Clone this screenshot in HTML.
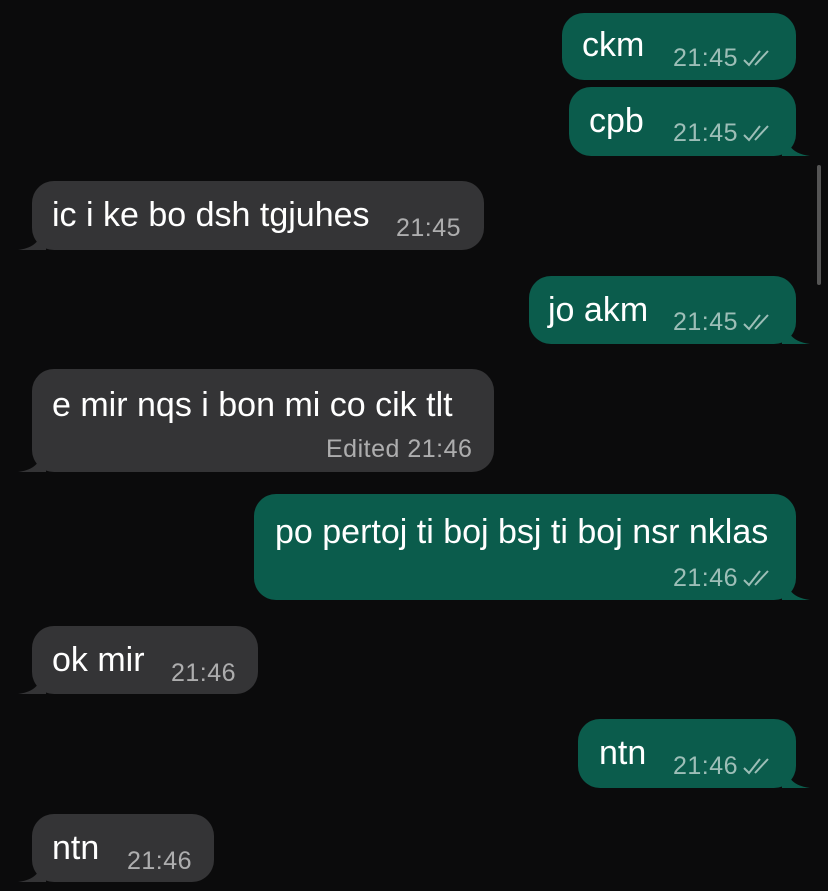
<!DOCTYPE html><html><head><style>
body{margin:0;width:828px;height:891px;background:#0b0b0c;overflow:hidden;position:relative;font-family:"Liberation Sans",sans-serif}
.b{position:absolute;border-radius:22px;color:#fff;font-size:34px;box-sizing:border-box}
.o{background:#0b5c4c}.i{background:#343436}
.t{position:absolute;font-size:25px;color:rgba(255,255,255,.6);letter-spacing:.5px;white-space:nowrap}
.m{position:absolute;top:0;white-space:nowrap}
.tl,.tr{position:absolute;bottom:0;width:28px;height:28px}
.tr{right:-14px}.tl{left:-14px}
.ck{display:inline-block;width:30px;height:20px;vertical-align:-2px;margin-left:4px}
</style></head><body>
<div style="position:absolute;left:817px;top:165px;width:4px;height:120px;background:#555;border-radius:2px"></div>

<div class="b o" style="left:562px;top:13px;width:234px;height:67px"><span class="m" style="left:20px;top:13px">ckm</span><span class="t" style="left:111px;top:31px">21:45<svg class="ck" viewBox="0 0 30 20"><path d="M2 12 L7 17 L18 3 M13 17 L26 3" stroke="rgba(255,255,255,.6)" stroke-width="2" fill="none"/></svg></span></div>

<div class="b o" style="left:569px;top:87px;width:227px;height:69px"><span class="m" style="left:20px;top:15px">cpb</span><span class="t" style="left:104px;top:32px">21:45<svg class="ck" viewBox="0 0 30 20"><path d="M2 12 L7 17 L18 3 M13 17 L26 3" stroke="rgba(255,255,255,.6)" stroke-width="2" fill="none"/></svg></span>
<svg class="tr" viewBox="0 0 28 28"><path d="M0 0 L8 18 Q13 26 28 28 L0 28Z" fill="#0b5c4c"/></svg></div>

<div class="b i" style="left:32px;top:181px;width:452px;height:69px"><span class="m" style="left:20px;top:15px">ic i ke bo dsh tgjuhes</span><span class="t" style="left:364px;top:33px">21:45</span>
<svg class="tl" viewBox="0 0 28 28"><path d="M28 0 L20 18 Q15 26 0 28 L28 28Z" fill="#343436"/></svg></div>

<div class="b o" style="left:529px;top:276px;width:267px;height:68px"><span class="m" style="left:19px;top:15px">jo akm</span><span class="t" style="left:144px;top:32px">21:45<svg class="ck" viewBox="0 0 30 20"><path d="M2 12 L7 17 L18 3 M13 17 L26 3" stroke="rgba(255,255,255,.6)" stroke-width="2" fill="none"/></svg></span>
<svg class="tr" viewBox="0 0 28 28"><path d="M0 0 L8 18 Q13 26 28 28 L0 28Z" fill="#0b5c4c"/></svg></div>

<div class="b i" style="left:32px;top:369px;width:462px;height:103px"><span class="m" style="left:20px;top:17px">e mir nqs i bon mi co cik tlt</span><span class="t" style="left:294px;top:66px">Edited 21:46</span>
<svg class="tl" viewBox="0 0 28 28"><path d="M28 0 L20 18 Q15 26 0 28 L28 28Z" fill="#343436"/></svg></div>

<div class="b o" style="left:254px;top:494px;width:542px;height:106px"><span class="m" style="left:21px;top:19px">po pertoj ti boj bsj ti boj nsr nklas</span><span class="t" style="left:419px;top:70px">21:46<svg class="ck" viewBox="0 0 30 20"><path d="M2 12 L7 17 L18 3 M13 17 L26 3" stroke="rgba(255,255,255,.6)" stroke-width="2" fill="none"/></svg></span>
<svg class="tr" viewBox="0 0 28 28"><path d="M0 0 L8 18 Q13 26 28 28 L0 28Z" fill="#0b5c4c"/></svg></div>

<div class="b i" style="left:32px;top:626px;width:226px;height:68px"><span class="m" style="left:20px;top:15px">ok mir</span><span class="t" style="left:139px;top:33px">21:46</span>
<svg class="tl" viewBox="0 0 28 28"><path d="M28 0 L20 18 Q15 26 0 28 L28 28Z" fill="#343436"/></svg></div>

<div class="b o" style="left:578px;top:719px;width:218px;height:69px"><span class="m" style="left:21px;top:15px">ntn</span><span class="t" style="left:95px;top:33px">21:46<svg class="ck" viewBox="0 0 30 20"><path d="M2 12 L7 17 L18 3 M13 17 L26 3" stroke="rgba(255,255,255,.6)" stroke-width="2" fill="none"/></svg></span>
<svg class="tr" viewBox="0 0 28 28"><path d="M0 0 L8 18 Q13 26 28 28 L0 28Z" fill="#0b5c4c"/></svg></div>

<div class="b i" style="left:32px;top:814px;width:182px;height:68px"><span class="m" style="left:20px;top:15px">ntn</span><span class="t" style="left:95px;top:33px">21:46</span>
<svg class="tl" viewBox="0 0 28 28"><path d="M28 0 L20 18 Q15 26 0 28 L28 28Z" fill="#343436"/></svg></div>
</body></html>
